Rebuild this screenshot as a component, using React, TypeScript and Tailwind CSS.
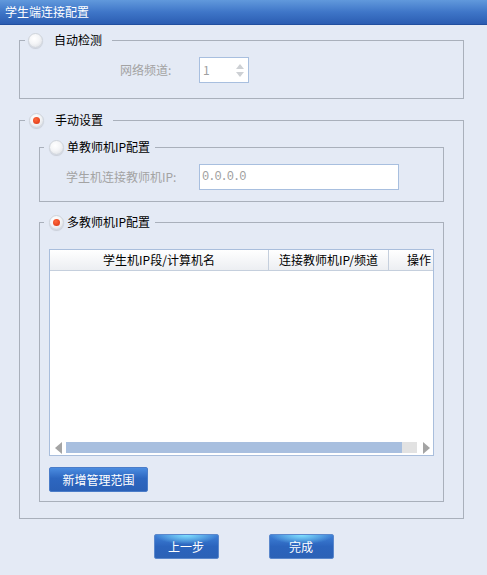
const FONT = "font-['Noto_Sans_CJK_SC','Liberation_Sans',sans-serif]"

function Radio({ checked }: { checked?: boolean }) {
  return (
    <span className="w-[15px] h-[15px] rounded-full border border-[#cfd4db] bg-[radial-gradient(circle_at_40%_35%,#ffffff_0%,#f4f5f7_45%,#d6dae0_100%)] shadow-[0_1px_1px_rgba(0,0,0,0.12)] flex items-center justify-center shrink-0">
      {checked && <span className="w-[7px] h-[7px] rounded-full bg-[radial-gradient(circle_at_40%_35%,#ff6a3d,#d9300f)]" />}
    </span>
  )
}

function Arrow({ dir }: { dir: "left" | "right" }) {
  return (
    <svg width="7" height="12" viewBox="0 0 7 12">
      {dir === "left" ? <polygon points="7,0 7,12 0,6" fill="#a4a4a4" /> : <polygon points="0,0 0,12 7,6" fill="#a4a4a4" />}
    </svg>
  )
}

export default function App() {
  return (
    <div className={`w-[487px] h-[575px] overflow-hidden bg-[#e4eaf5] text-[12px] leading-[16px] text-black ${FONT}`}>
      <div className="h-[25px] px-[5px] flex items-center text-white bg-[linear-gradient(#6199dc,#3f76c8_50%,#2b5db2)] border-b border-[#214f9f]">
        学生端连接配置
      </div>

      <div className="pl-[19px]">
        <fieldset className="mt-[7px] w-[445px] border border-[#a9b0bb] px-[5px]">
          <legend className="flex items-center h-[16px] pl-[3px] pr-[10px]">
            <Radio />
            <span className="ml-[11px]">自动检测</span>
          </legend>
          <div className="flex items-center mt-[9px] mb-[15px]">
            <span className="ml-[95px] w-[79px] text-[#a3a3a3]">网络频道:</span>
            <div className="w-[50px] h-[26px] border border-[#a8bfdf] bg-white flex items-center justify-between pl-[3px] pr-[4px]">
              <span className="text-[#a0a0a0]">1</span>
              <div className="flex flex-col gap-[3px]">
                <svg width="8" height="5" viewBox="0 0 8 5"><polygon points="0,5 8,5 4,0" fill="#cdd0d4" /></svg>
                <svg width="8" height="5" viewBox="0 0 8 5"><polygon points="0,0 8,0 4,5" fill="#cdd0d4" /></svg>
              </div>
            </div>
          </div>
        </fieldset>

        <fieldset className="mt-[13px] w-[445px] border border-[#a9b0bb] px-[5px]">
          <legend className="flex items-center h-[16px] pl-[4px] pr-[10px]">
            <Radio checked />
            <span className="ml-[11px]">手动设置</span>
          </legend>
          <div className="mx-[14px] mb-[16px]">
            <fieldset className="mt-[11px] w-[405px] border border-[#a9b0bb] px-[4px]">
              <legend className="flex items-center h-[16px] pl-[5px] pr-[5px]">
                <Radio />
                <span className="ml-[3px]">单教师机IP配置</span>
              </legend>
              <div className="flex items-center mt-[9px] mb-[11px]">
                <span className="ml-[22px] w-[133px] text-[#a3a3a3]">学生机连接教师机IP:</span>
                <div className="w-[200px] h-[26px] border border-[#a8bfdf] bg-white flex items-center pl-[2px] text-[#a0a0a0] font-['Liberation_Mono',monospace] tracking-[-1px]">
                  0.0.0.0
                </div>
              </div>
            </fieldset>

            <fieldset className="mt-[12px] w-[405px] border border-[#a9b0bb] px-[4px]">
              <legend className="flex items-center h-[16px] pl-[5px] pr-[5px]">
                <Radio checked />
                <span className="ml-[3px]">多教师机IP配置</span>
              </legend>
              <div className="ml-[5px] mt-[19px] w-[385px] h-[207px] border border-[#a9bedc] bg-white flex flex-col">
                <div className="h-[21px] flex border-b border-[#c5cfdd] bg-[linear-gradient(#ffffff,#eceef2)] overflow-hidden">
                  <div className="w-[219px] shrink-0 border-r border-[#c5cfdd] flex items-center justify-center">学生机IP段/计算机名</div>
                  <div className="w-[120px] shrink-0 border-r border-[#c5cfdd] flex items-center justify-center">连接教师机IP/频道</div>
                  <div className="flex-1 flex items-center pl-[18px] whitespace-nowrap">操作</div>
                </div>
                <div className="flex-1" />
                <div className="h-[11px] mb-[2px] flex items-center">
                  <div className="ml-[5px] flex"><Arrow dir="left" /></div>
                  <div className="ml-[4px] w-[336px] h-[11px] bg-[#a8bfdf]" />
                  <div className="w-[15px] h-[11px] bg-[#e2e2e2]" />
                  <div className="ml-[6px] flex"><Arrow dir="right" /></div>
                </div>
              </div>
              <button className="ml-[5px] mt-[11px] mb-[9px] w-[99px] h-[25px] rounded-[2px] border border-[#4b7dc9] text-white bg-[linear-gradient(#4b8ce0,#2d67c0_45%,#2a60b7)] flex items-center justify-center">
                新增管理范围
              </button>
            </fieldset>
          </div>
        </fieldset>
      </div>

      <div className="mt-[15px] flex justify-center gap-[50px]">
        <button className="w-[65px] h-[25px] rounded-[2px] border border-[#5b88cc] text-white bg-[radial-gradient(ellipse_50%_40%_at_50%_0%,#7fe0ff_0%,rgba(127,224,255,0)_100%),linear-gradient(#3e7fd6,#2b64bd_50%,#2c62b6)] flex items-center justify-center">
          上一步
        </button>
        <button className="w-[65px] h-[25px] rounded-[2px] border border-[#5b88cc] text-white bg-[radial-gradient(ellipse_50%_40%_at_50%_0%,#7fe0ff_0%,rgba(127,224,255,0)_100%),linear-gradient(#3e7fd6,#2b64bd_50%,#2c62b6)] flex items-center justify-center">
          完成
        </button>
      </div>
    </div>
  )
}
